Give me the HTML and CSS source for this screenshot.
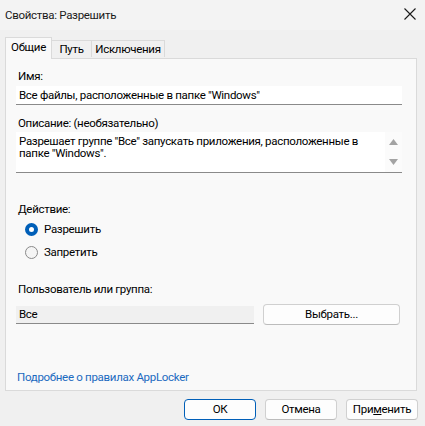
FILE: index.html
```html
<!DOCTYPE html>
<html lang="ru">
<head>
<meta charset="utf-8">
<link rel="stylesheet" href="styles.css">
</head>
<body>
<div class="window">
  <div class="titlebar">
    <span class="title">Свойства: Разрешить</span>
    <svg class="close" width="12" height="12" viewBox="0 0 12 12"><path d="M0.5 0.5L11.5 11.5M11.5 0.5L0.5 11.5" stroke="#1a1a1a" stroke-width="1.1" fill="none"/></svg>
  </div>
  <div class="tabs">
    <div class="tab active">Общие</div>
    <div class="tab">Путь</div>
    <div class="tab">Исключения</div>
  </div>
  <div class="panel">
    <div class="label first">Имя:</div>
    <div class="input">Все файлы, расположенные в папке "Windows"</div>
    <div class="label desc">Описание: (необязательно)</div>
    <div class="textarea">
      <div class="ta-text">Разрешает группе "Все" запускать приложения, расположенные в папке "Windows".</div>
      <div class="scroll">
        <svg width="9" height="6" viewBox="0 0 9 6"><path d="M4.5 0L9 6H0Z" fill="#a3a3a3"/></svg>
        <svg width="9" height="6" viewBox="0 0 9 6"><path d="M0 0H9L4.5 6Z" fill="#a3a3a3"/></svg>
      </div>
    </div>
    <div class="label action">Действие:</div>
    <div class="radio-row r1"><span class="radio on"></span>Разрешить</div>
    <div class="radio-row r2"><span class="radio"></span>Запретить</div>
    <div class="label user">Пользователь или группа:</div>
    <div class="user-row">
      <div class="field">Все</div>
      <div class="btn choose">Выбрать...</div>
    </div>
    <div class="link">Подробнее о правилах AppLocker</div>
  </div>
  <div class="buttons">
    <div class="btn dlg ok">ОК</div>
    <div class="btn dlg">Отмена</div>
    <div class="btn dlg">При<u>м</u>енить</div>
  </div>
</div>
</body>
</html>
```
FILE: styles.css
```css
* { box-sizing: border-box; }
html, body { margin: 0; padding: 0; }
body {
  width: 425px;
  height: 426px;
  background: #f0f0f0;
  font-family: Roboto, "Liberation Sans", Arial, sans-serif;
  font-size: 11.5px;
  letter-spacing: -0.3px;
  color: #000;
  overflow: hidden;
}
.window { display: flex; flex-direction: column; height: 426px; }
.titlebar {
  height: 30px;
  display: flex;
  align-items: center;
  justify-content: space-between;
  padding: 0 9px 0 5px;
  background: #f3f3f3;
}
.title { color: #1a1a1a; font-size: 11.5px; }
.close { margin-top: -2px; }
.tabs {
  display: flex;
  margin-top: 7px;
  padding-left: 5px;
  height: 21px;
  align-items: flex-end;
  position: relative;
  z-index: 1;
}
.tab {
  height: 17px;
  border: 1px solid #dadada;
  border-bottom: none;
  border-left: none;
  background: #f0f0f0;
  display: flex;
  align-items: center;
  justify-content: center;
  line-height: 15px;
  margin-bottom: 1px;
}
.tab.active {
  height: 22px;
  border-left: 1px solid #dadada;
  background: #f9f9f9;
  width: 47px;
  margin-bottom: -1px;
  padding-bottom: 2px;
}
.tab:nth-child(2) { width: 40px; }
.tab:nth-child(3) { width: 73px; }
.panel {
  margin: 0 8px 0 5px;
  height: 333px;
  border: 1px solid #dadada;
  background: #f9f9f9;
  display: flex;
  flex-direction: column;
  padding: 0 14px 0 10px;
}
.label { line-height: 15px; padding-left: 2px; }
.label.first { margin-top: 10px; }
.input {
  margin-top: 2px;
  height: 19px;
  background: #fff;
  border-bottom: 1px solid #8a8a8a;
  padding: 2px 3px 0;
  line-height: 15px;
}
.label.desc { margin-top: 11px; }
.textarea {
  margin-top: 1px;
  height: 41px;
  background: #fff;
  border-bottom: 1px solid #8a8a8a;
  display: flex;
  justify-content: space-between;
}
.ta-text {
  padding: 3px 3px 0;
  line-height: 12px;
  width: 368px;
}
.scroll {
  width: 17px;
  display: flex;
  flex-direction: column;
  justify-content: space-between;
  align-items: center;
  padding: 7px 0 7px;
  background: #fbfbfb;
}
.scroll svg { display: block; }
.label.action { margin-top: 29px; }
.radio-row {
  display: flex;
  align-items: center;
  line-height: 15px;
  padding-left: 9px;
}
.radio-row.r1 { margin-top: 5px; }
.radio-row.r2 { margin-top: 8px; }
.radio {
  width: 13px;
  height: 13px;
  border-radius: 50%;
  border: 1px solid #8a8a8a;
  background: #f5f5f5;
  margin-right: 6px;
  flex: none;
}
.radio.on {
  border: 4px solid #005fb8;
  background: #fff;
}
.label.user { margin-top: 22px; }
.user-row {
  display: flex;
  align-items: flex-start;
  margin-top: 7px;
}
.field {
  margin-top: 2px;
  width: 238px;
  height: 18px;
  background: #f0f0f0;
  border-bottom: 1px solid #8a8a8a;
  padding: 1px 3px 0;
  line-height: 15px;
}
.btn {
  display: flex;
  align-items: center;
  justify-content: center;
  background: #fdfdfd;
  border: 1px solid #d0d0d0;
  border-bottom-color: #bcbcbc;
  border-radius: 4px;
  line-height: 15px;
}
.choose {
  margin-left: 9px;
  width: 137px;
  height: 21px;
}
.link {
  margin-top: auto;
  margin-bottom: 5px;
  color: #1b6ac0;
  padding-left: 1px;
  line-height: 15px;
}
.buttons {
  display: flex;
  justify-content: flex-end;
  gap: 9px;
  padding-right: 7px;
  margin-top: 8px;
}
.dlg { width: 72px; height: 21px; }
.ok { border: 1px solid #005fb8; }
```
